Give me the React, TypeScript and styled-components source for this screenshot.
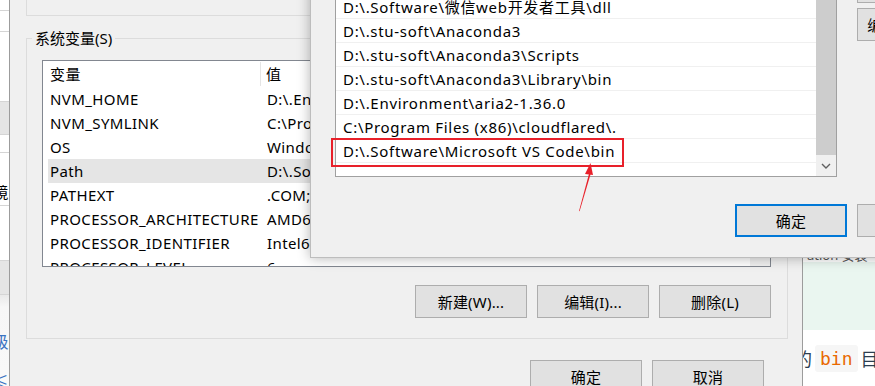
import React from "react";
import styled, { createGlobalStyle } from "styled-components";

// Data
interface SysVar {
  name: string;
  value: string;
  selected?: boolean;
}

interface Band {
  h: number;
  bg: string;
  pad?: number;
  text?: string;
}

const systemVars: SysVar[] = [
  { name: "NVM_HOME", value: "D:\\.Environment\\nvm" },
  { name: "NVM_SYMLINK", value: "C:\\Program Files\\nodejs" },
  { name: "OS", value: "Windows_NT" },
  { name: "Path", value: "D:\\.Software\\VMware\\bin", selected: true },
  { name: "PATHEXT", value: ".COM;.EXE;.BAT;.CMD" },
  { name: "PROCESSOR_ARCHITECTURE", value: "AMD64" },
  { name: "PROCESSOR_IDENTIFIER", value: "Intel64 Family 6 Model 142" },
  { name: "PROCESSOR_LEVEL", value: "6" },
];

const pathEntries = [
  "D:\\.Software\\微信web开发者工具\\node",
  "D:\\.Software\\微信web开发者工具\\dll",
  "D:\\.stu-soft\\Anaconda3",
  "D:\\.stu-soft\\Anaconda3\\Scripts",
  "D:\\.stu-soft\\Anaconda3\\Library\\bin",
  "D:\\.Environment\\aria2-1.36.0",
  "C:\\Program Files (x86)\\cloudflared\\.",
  "D:\\.Software\\Microsoft VS Code\\bin",
];

const stripBands: Band[] = [
  { h: 10, bg: "#ffffff" },
  { h: 20, bg: "#ffffff" },
  { h: 69, bg: "#ffffff" },
  { h: 32, bg: "#e5e5e5" },
  { h: 17, bg: "#ffffff" },
  { h: 28, bg: "#ffffff", pad: 24, text: "境" },
  { h: 54, bg: "#ffffff" },
  { h: 33, bg: "#e5e5e5" },
];

function App() {
  return (
    <>
      <GlobalStyle />
      <Screen>
        <BehindWindow>
          {stripBands.map((b, i) => (
            <StripBand key={i} $h={b.h} $bg={b.bg} $pad={b.pad ?? 0}>
              {b.text}
            </StripBand>
          ))}
          <StripFooter>
            <StripLink>级</StripLink>
            <StripLink>≤</StripLink>
          </StripFooter>
        </BehindWindow>

        <EnvDialog>
          <UserGroupTail />
          <SysGroup>
            <Legend>系统变量(S)</Legend>
            <GroupBody>
              <ListView>
                <ListContent>
                  <ColumnsHeader>
                    <HeaderCell $divider>变量</HeaderCell>
                    <HeaderCell>值</HeaderCell>
                  </ColumnsHeader>
                  {systemVars.map((v) => (
                    <VarRow key={v.name} $selected={v.selected}>
                      <Cell>{v.name}</Cell>
                      <Cell $value>{v.value}</Cell>
                    </VarRow>
                  ))}
                </ListContent>
                <ListScrollbar />
              </ListView>
              <ButtonRow>
                <Button>新建(W)...</Button>
                <Button>编辑(I)...</Button>
                <Button>删除(L)</Button>
              </ButtonRow>
            </GroupBody>
          </SysGroup>
          <EnvFooter>
            <Button>确定</Button>
            <Button>取消</Button>
          </EnvFooter>
        </EnvDialog>

        <WebPage>
          <PageSpacer />
          <FaintLine>ation 安装</FaintLine>
          <TipBox />
          <Paragraph>
            的<Code>bin</Code>目录
          </Paragraph>
        </WebPage>

        <EditDialog>
          <EditBody>
            <PathList>
              <PathRows>
                {pathEntries.map((p) => (
                  <PathRow key={p}>{p}</PathRow>
                ))}
              </PathRows>
              <PathScrollbar>
                <Thumb />
                <ArrowButton>
                  <svg width="10" height="6" viewBox="0 0 10 6">
                    <path d="M1 1 L5 5 L9 1" fill="none" stroke="#606060" strokeWidth="1.4" />
                  </svg>
                </ArrowButton>
              </PathScrollbar>
            </PathList>
            <SideButtons>
              <Button>下移(O)</Button>
              <Button>编辑文本(T)...</Button>
            </SideButtons>
          </EditBody>
          <EditFooter>
            <Button $primary>确定</Button>
            <Button>取消</Button>
          </EditFooter>
        </EditDialog>

        <Highlight />
        <Arrow width="26" height="56" viewBox="0 0 26 56">
          <path d="M5 51 L15.2 13 L16.8 13.4 L5.6 51.2 Z" fill="#e8202a" />
          <path d="M11 14 L16.5 3 L19 15 Z" fill="#e8202a" />
        </Arrow>
      </Screen>
    </>
  );
}

export default App;

const GlobalStyle = createGlobalStyle`
  html, body {
    margin: 0;
    padding: 0;
  }
  body {
    width: 875px;
    height: 386px;
    overflow: hidden;
    background: #f0f0f0;
    font-family: "Noto Sans", "Noto Sans CJK SC", sans-serif;
    font-size: 15px;
    letter-spacing: 0.4px;
    color: #000;
  }
`;

const Screen = styled.div`
  position: relative;
  display: flex;
  width: 875px;
  height: 386px;
  overflow: hidden;
`;

const BehindWindow = styled.div`
  flex: none;
  width: 9px;
  background: #fff;
  border-right: 1px solid #9c9c9c;
  display: flex;
  flex-direction: column;
  overflow: hidden;
`;

const StripBand = styled.div<{ $h: number; $bg: string; $pad: number }>`
  flex: none;
  height: ${(p) => p.$h}px;
  padding-top: ${(p) => p.$pad}px;
  background: ${(p) => p.$bg};
  border-bottom: 1px solid #d5d5d5;
  display: flex;
  align-items: center;
  justify-content: flex-end;
  white-space: nowrap;
  font-size: 15px;
`;

const StripFooter = styled.div`
  flex: none;
  padding-top: 26px;
  background: linear-gradient(#e9e9e9, #f7f7f7 12px, #fafafa);
  display: flex;
  flex-direction: column;
`;

const StripLink = styled.div`
  flex: none;
  height: 40px;
  display: flex;
  align-items: center;
  justify-content: flex-end;
  color: #3b73c2;
  font-size: 16px;
  white-space: nowrap;
`;

const EnvDialog = styled.div`
  flex: none;
  width: 793px;
  box-sizing: border-box;
  background: #f0f0f0;
  border-right: 1px solid #9c9c9c;
  padding: 0 14px 0 16px;
  display: flex;
  flex-direction: column;
`;

const UserGroupTail = styled.div`
  flex: none;
  height: 16px;
  box-sizing: border-box;
  border: 1px solid #dcdcdc;
  border-top: none;
`;

const SysGroup = styled.fieldset`
  margin: 12px 0 0;
  padding: 0;
  border: 1px solid #dcdcdc;
  min-width: 0;
`;

const Legend = styled.legend`
  margin-left: 5px;
  padding: 0 3px;
  line-height: 20px;
  letter-spacing: 0;
`;

const GroupBody = styled.div`
  padding: 12px 16px 20px 15px;
  display: flex;
  flex-direction: column;
`;

const ListView = styled.div`
  height: 207px;
  box-sizing: border-box;
  background: #fff;
  border: 1px solid #828790;
  display: flex;
  overflow: hidden;
`;

const ListContent = styled.div`
  flex: 1;
  min-width: 0;
  display: flex;
  flex-direction: column;
`;

const ListScrollbar = styled.div`
  flex: none;
  width: 20px;
  background: #f0f0f0;
`;

const ColumnsHeader = styled.div`
  flex: none;
  display: grid;
  grid-template-columns: 213px 1fr;
  height: 26px;
  margin-left: 5px;
  align-items: center;
`;

const HeaderCell = styled.div<{ $divider?: boolean }>`
  height: 24px;
  line-height: 24px;
  padding-left: ${(p) => (p.$divider ? "2px" : "5px")};
  border-right: ${(p) => (p.$divider ? "1px solid #e5e5e5" : "none")};
`;

const VarRow = styled.div<{ $selected?: boolean }>`
  flex: none;
  display: grid;
  grid-template-columns: 214px 1fr;
  height: 24px;
  line-height: 24px;
  margin-left: 5px;
  background: ${(p) => (p.$selected ? "#e5e5e5" : "transparent")};
`;

const Cell = styled.div<{ $value?: boolean }>`
  padding-left: ${(p) => (p.$value ? "5px" : "2px")};
  white-space: nowrap;
  overflow: hidden;
`;

const ButtonRow = styled.div`
  display: flex;
  justify-content: flex-end;
  gap: 10px;
  margin-top: 18px;
`;

const Button = styled.button<{ $primary?: boolean }>`
  flex: none;
  width: 112px;
  height: 33px;
  box-sizing: border-box;
  background: #e1e1e1;
  border: ${(p) => (p.$primary ? "2px solid #0078d7" : "1px solid #adadad")};
  border-radius: 0;
  padding: 0;
  font-family: inherit;
  font-size: 15px;
  letter-spacing: 0.2px;
  color: #000;
  white-space: nowrap;
`;

const EnvFooter = styled.div`
  display: flex;
  justify-content: flex-end;
  gap: 10px;
  margin-top: 21px;
  padding-right: 24px;
`;

const WebPage = styled.div`
  flex: 1;
  min-width: 0;
  background: #fff;
  display: flex;
  flex-direction: column;
  overflow: hidden;
  letter-spacing: 0;
`;

const PageSpacer = styled.div`
  flex: none;
  height: 248px;
`;

const FaintLine = styled.div`
  flex: none;
  height: 14px;
  line-height: 14px;
  font-size: 13px;
  color: #555;
  white-space: nowrap;
  padding-left: 4px;
`;

const TipBox = styled.div`
  flex: none;
  height: 68px;
  background: #eaf6f0;
`;

const Paragraph = styled.div`
  flex: none;
  height: 56px;
  display: flex;
  align-items: center;
  gap: 3px;
  margin-left: -9px;
  font-size: 18px;
  color: #2c3e50;
  white-space: nowrap;
`;

const Code = styled.span`
  font-family: "DejaVu Sans Mono", monospace;
  font-size: 18px;
  color: #e96900;
  background: #f6f6f6;
  border-radius: 3px;
  padding: 3px 5px;
`;

const EditDialog = styled.div`
  position: absolute;
  left: 310px;
  top: -40px;
  width: 685px;
  height: 298px;
  box-sizing: border-box;
  background: #f0f0f0;
  border: 1px solid #bdbdbd;
  box-shadow: 0 0 12px rgba(0, 0, 0, 0.3);
  padding: 9px 25px 20px 24px;
  display: flex;
  flex-direction: column;
`;

const EditBody = styled.div`
  display: flex;
  gap: 20px;
  align-items: flex-start;
`;

const PathList = styled.div`
  flex: none;
  width: 502px;
  height: 207px;
  box-sizing: border-box;
  background: #fff;
  border: 1px solid #a0a0a0;
  display: flex;
  overflow: hidden;
`;

const PathRows = styled.div`
  flex: 1;
  min-width: 0;
  display: flex;
  flex-direction: column;
`;

const PathRow = styled.div`
  flex: none;
  height: 24px;
  box-sizing: border-box;
  border-bottom: 1px solid #f0f0f0;
  padding-left: 7px;
  line-height: 24px;
  white-space: nowrap;
  letter-spacing: 0.7px;
`;

const PathScrollbar = styled.div`
  flex: none;
  width: 20px;
  display: flex;
  flex-direction: column;
  background: #f0f0f0;
`;

const Thumb = styled.div`
  flex: 1;
  background: #cdcdcd;
`;

const ArrowButton = styled.div`
  flex: none;
  height: 21px;
  display: flex;
  align-items: center;
  justify-content: center;
`;

const SideButtons = styled.div`
  display: flex;
  flex-direction: column;
  gap: 5px;
`;

const EditFooter = styled.div`
  display: flex;
  justify-content: flex-end;
  gap: 10px;
  margin-top: 27px;
`;

const Highlight = styled.div`
  position: absolute;
  left: 331px;
  top: 138px;
  width: 293px;
  height: 29px;
  box-sizing: border-box;
  border: 2px solid #e8202a;
`;

const Arrow = styled.svg`
  position: absolute;
  left: 574px;
  top: 160px;
`;
